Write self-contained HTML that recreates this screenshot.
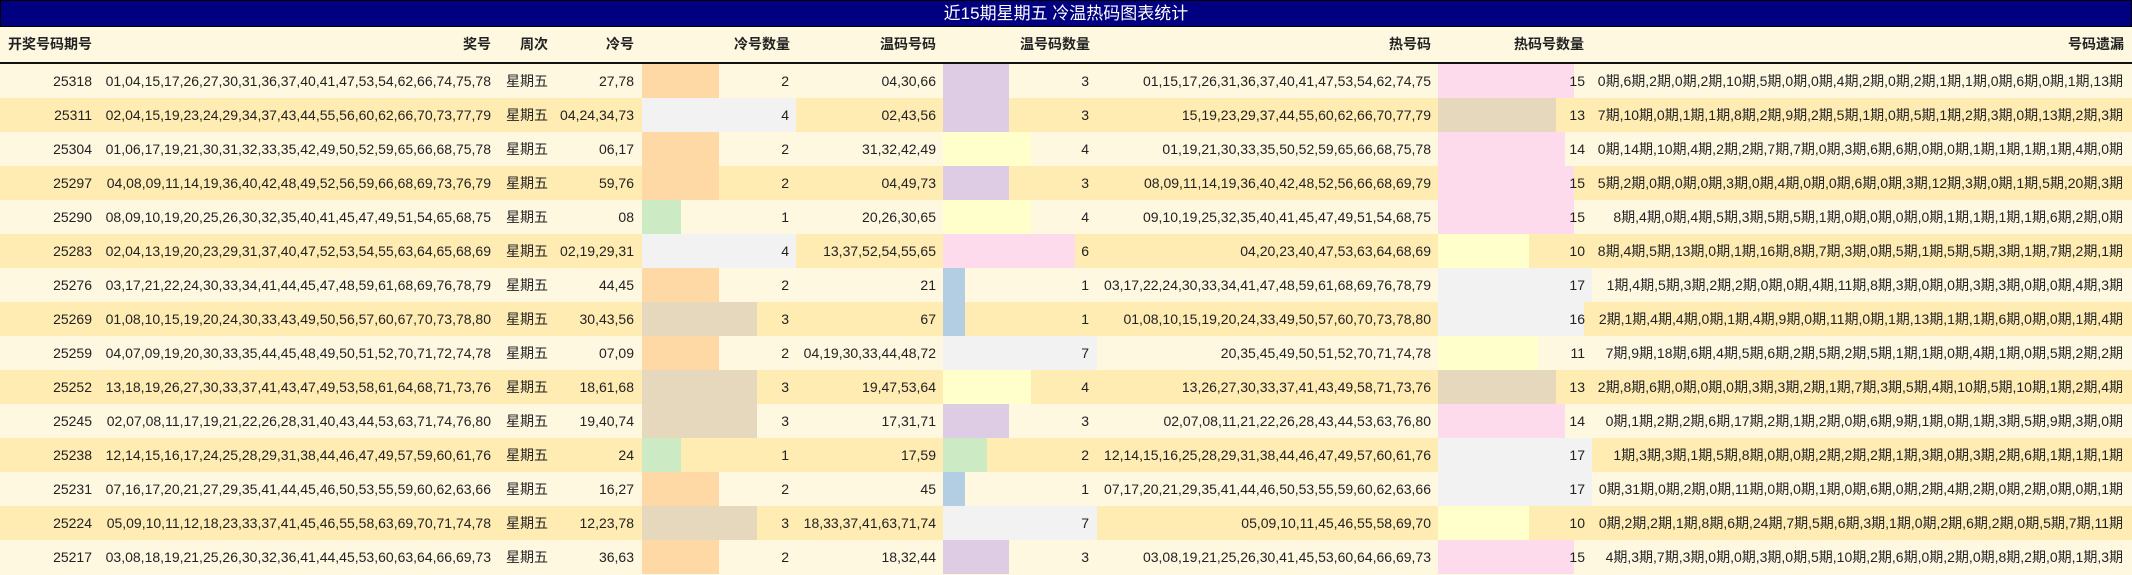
<!DOCTYPE html>
<html><head><meta charset="utf-8"><style>
*{margin:0;padding:0;box-sizing:border-box}
body{width:2132px;height:575px;overflow:hidden;background:#fff8e1;font-family:"Liberation Sans","Noto Sans CJK SC",sans-serif;font-size:14px;color:#222;position:relative}
#tt{position:absolute;left:0;top:0;width:2132px;height:27px;background:#000080;border:1px solid #000;color:#fff;font-size:17px;line-height:25px;text-align:center}
#hd{position:absolute;left:0;top:27px;width:2132px;height:37px;background:#fff8e1;border-bottom:2px solid #111;font-weight:bold}
#hd .t{line-height:35px}
.r{position:absolute;left:0;width:2132px;height:34px}
.o{background:#fff8e1}.e{background:#ffecb3}
.t{position:absolute;top:0;line-height:34px;white-space:nowrap}
.b{position:absolute;top:0;height:34px}
.a1{right:2040px}.a2{right:1641px}.a3{left:506px}.a4{right:1498px}.a5{right:1343px}.a6{right:1196px}.a7{right:1043px}.a8{right:701px}.a9{right:547px}.a10{right:9px}
.bc{left:642px}.bw{left:943px}.bh{left:1438px}
.G{background:#ccebc5}.P{background:#fed9a6}.T{background:#e5d8bd}.Y{background:#f2f2f2}.B{background:#b3cde3}.L{background:#decbe4}.W{background:#ffffcc}.K{background:#fddaec}
</style></head><body>
<div id="tt">近15期星期五 冷温热码图表统计</div>
<div id="hd">
<span class="t" style="left:8px">开奖号码期号</span>
<span class="t a2">奖号</span>
<span class="t" style="right:1584px">周次</span>
<span class="t a4">冷号</span>
<span class="t" style="right:1342px">冷号数量</span>
<span class="t a6">温码号码</span>
<span class="t" style="right:1042px">温号码数量</span>
<span class="t a8">热号码</span>
<span class="t" style="right:548px">热码号数量</span>
<span class="t" style="right:8px">号码遗漏</span>
</div>

<div class="r o" style="top:64px"><div class="b bc P" style="width:77px"></div><div class="b bw L" style="width:66px"></div><div class="b bh K" style="width:136px"></div>
<span class="t a1">25318</span><span class="t a2">01,04,15,17,26,27,30,31,36,37,40,41,47,53,54,62,66,74,75,78</span><span class="t a3">星期五</span><span class="t a4">27,78</span><span class="t a5">2</span><span class="t a6">04,30,66</span><span class="t a7">3</span><span class="t a8">01,15,17,26,31,36,37,40,41,47,53,54,62,74,75</span><span class="t a9">15</span><span class="t a10">0期,6期,2期,0期,2期,10期,5期,0期,0期,4期,2期,0期,2期,1期,1期,0期,6期,0期,1期,13期</span></div>

<div class="r e" style="top:98px"><div class="b bc Y" style="width:154px"></div><div class="b bw L" style="width:66px"></div><div class="b bh T" style="width:118px"></div>
<span class="t a1">25311</span><span class="t a2">02,04,15,19,23,24,29,34,37,43,44,55,56,60,62,66,70,73,77,79</span><span class="t a3">星期五</span><span class="t a4">04,24,34,73</span><span class="t a5">4</span><span class="t a6">02,43,56</span><span class="t a7">3</span><span class="t a8">15,19,23,29,37,44,55,60,62,66,70,77,79</span><span class="t a9">13</span><span class="t a10">7期,10期,0期,1期,1期,8期,2期,9期,2期,5期,1期,0期,5期,1期,2期,3期,0期,13期,2期,3期</span></div>

<div class="r o" style="top:132px"><div class="b bc P" style="width:77px"></div><div class="b bw W" style="width:88px"></div><div class="b bh K" style="width:127px"></div>
<span class="t a1">25304</span><span class="t a2">01,06,17,19,21,30,31,32,33,35,42,49,50,52,59,65,66,68,75,78</span><span class="t a3">星期五</span><span class="t a4">06,17</span><span class="t a5">2</span><span class="t a6">31,32,42,49</span><span class="t a7">4</span><span class="t a8">01,19,21,30,33,35,50,52,59,65,66,68,75,78</span><span class="t a9">14</span><span class="t a10">0期,14期,10期,4期,2期,2期,7期,7期,0期,3期,6期,6期,0期,0期,1期,1期,1期,1期,4期,0期</span></div>

<div class="r e" style="top:166px"><div class="b bc P" style="width:77px"></div><div class="b bw L" style="width:66px"></div><div class="b bh K" style="width:136px"></div>
<span class="t a1">25297</span><span class="t a2">04,08,09,11,14,19,36,40,42,48,49,52,56,59,66,68,69,73,76,79</span><span class="t a3">星期五</span><span class="t a4">59,76</span><span class="t a5">2</span><span class="t a6">04,49,73</span><span class="t a7">3</span><span class="t a8">08,09,11,14,19,36,40,42,48,52,56,66,68,69,79</span><span class="t a9">15</span><span class="t a10">5期,2期,0期,0期,0期,3期,0期,4期,0期,0期,6期,0期,3期,12期,3期,0期,1期,5期,20期,3期</span></div>

<div class="r o" style="top:200px"><div class="b bc G" style="width:39px"></div><div class="b bw W" style="width:88px"></div><div class="b bh K" style="width:136px"></div>
<span class="t a1">25290</span><span class="t a2">08,09,10,19,20,25,26,30,32,35,40,41,45,47,49,51,54,65,68,75</span><span class="t a3">星期五</span><span class="t a4">08</span><span class="t a5">1</span><span class="t a6">20,26,30,65</span><span class="t a7">4</span><span class="t a8">09,10,19,25,32,35,40,41,45,47,49,51,54,68,75</span><span class="t a9">15</span><span class="t a10">8期,4期,0期,4期,5期,3期,5期,5期,1期,0期,0期,0期,0期,1期,1期,1期,1期,6期,2期,0期</span></div>

<div class="r e" style="top:234px"><div class="b bc Y" style="width:154px"></div><div class="b bw K" style="width:132px"></div><div class="b bh W" style="width:91px"></div>
<span class="t a1">25283</span><span class="t a2">02,04,13,19,20,23,29,31,37,40,47,52,53,54,55,63,64,65,68,69</span><span class="t a3">星期五</span><span class="t a4">02,19,29,31</span><span class="t a5">4</span><span class="t a6">13,37,52,54,55,65</span><span class="t a7">6</span><span class="t a8">04,20,23,40,47,53,63,64,68,69</span><span class="t a9">10</span><span class="t a10">8期,4期,5期,13期,0期,1期,16期,8期,7期,3期,0期,5期,1期,5期,5期,3期,1期,7期,2期,1期</span></div>

<div class="r o" style="top:268px"><div class="b bc P" style="width:77px"></div><div class="b bw B" style="width:22px"></div><div class="b bh Y" style="width:154px"></div>
<span class="t a1">25276</span><span class="t a2">03,17,21,22,24,30,33,34,41,44,45,47,48,59,61,68,69,76,78,79</span><span class="t a3">星期五</span><span class="t a4">44,45</span><span class="t a5">2</span><span class="t a6">21</span><span class="t a7">1</span><span class="t a8">03,17,22,24,30,33,34,41,47,48,59,61,68,69,76,78,79</span><span class="t a9">17</span><span class="t a10">1期,4期,5期,3期,2期,2期,0期,0期,4期,11期,8期,3期,0期,0期,3期,3期,0期,0期,4期,3期</span></div>

<div class="r e" style="top:302px"><div class="b bc T" style="width:115px"></div><div class="b bw B" style="width:22px"></div><div class="b bh Y" style="width:146px"></div>
<span class="t a1">25269</span><span class="t a2">01,08,10,15,19,20,24,30,33,43,49,50,56,57,60,67,70,73,78,80</span><span class="t a3">星期五</span><span class="t a4">30,43,56</span><span class="t a5">3</span><span class="t a6">67</span><span class="t a7">1</span><span class="t a8">01,08,10,15,19,20,24,33,49,50,57,60,70,73,78,80</span><span class="t a9">16</span><span class="t a10">2期,1期,4期,4期,0期,1期,4期,9期,0期,11期,0期,1期,13期,1期,1期,6期,0期,0期,1期,4期</span></div>

<div class="r o" style="top:336px"><div class="b bc P" style="width:77px"></div><div class="b bw Y" style="width:154px"></div><div class="b bh W" style="width:100px"></div>
<span class="t a1">25259</span><span class="t a2">04,07,09,19,20,30,33,35,44,45,48,49,50,51,52,70,71,72,74,78</span><span class="t a3">星期五</span><span class="t a4">07,09</span><span class="t a5">2</span><span class="t a6">04,19,30,33,44,48,72</span><span class="t a7">7</span><span class="t a8">20,35,45,49,50,51,52,70,71,74,78</span><span class="t a9">11</span><span class="t a10">7期,9期,18期,6期,4期,5期,6期,2期,5期,2期,5期,1期,1期,0期,4期,1期,0期,5期,2期,2期</span></div>

<div class="r e" style="top:370px"><div class="b bc T" style="width:115px"></div><div class="b bw W" style="width:88px"></div><div class="b bh T" style="width:118px"></div>
<span class="t a1">25252</span><span class="t a2">13,18,19,26,27,30,33,37,41,43,47,49,53,58,61,64,68,71,73,76</span><span class="t a3">星期五</span><span class="t a4">18,61,68</span><span class="t a5">3</span><span class="t a6">19,47,53,64</span><span class="t a7">4</span><span class="t a8">13,26,27,30,33,37,41,43,49,58,71,73,76</span><span class="t a9">13</span><span class="t a10">2期,8期,6期,0期,0期,0期,3期,3期,2期,1期,7期,3期,5期,4期,10期,5期,10期,1期,2期,4期</span></div>

<div class="r o" style="top:404px"><div class="b bc T" style="width:115px"></div><div class="b bw L" style="width:66px"></div><div class="b bh K" style="width:127px"></div>
<span class="t a1">25245</span><span class="t a2">02,07,08,11,17,19,21,22,26,28,31,40,43,44,53,63,71,74,76,80</span><span class="t a3">星期五</span><span class="t a4">19,40,74</span><span class="t a5">3</span><span class="t a6">17,31,71</span><span class="t a7">3</span><span class="t a8">02,07,08,11,21,22,26,28,43,44,53,63,76,80</span><span class="t a9">14</span><span class="t a10">0期,1期,2期,2期,6期,17期,2期,1期,2期,0期,6期,9期,1期,0期,1期,3期,5期,9期,3期,0期</span></div>

<div class="r e" style="top:438px"><div class="b bc G" style="width:39px"></div><div class="b bw G" style="width:44px"></div><div class="b bh Y" style="width:154px"></div>
<span class="t a1">25238</span><span class="t a2">12,14,15,16,17,24,25,28,29,31,38,44,46,47,49,57,59,60,61,76</span><span class="t a3">星期五</span><span class="t a4">24</span><span class="t a5">1</span><span class="t a6">17,59</span><span class="t a7">2</span><span class="t a8">12,14,15,16,25,28,29,31,38,44,46,47,49,57,60,61,76</span><span class="t a9">17</span><span class="t a10">1期,3期,3期,1期,5期,8期,0期,0期,2期,2期,2期,1期,3期,0期,3期,2期,6期,1期,1期,1期</span></div>

<div class="r o" style="top:472px"><div class="b bc P" style="width:77px"></div><div class="b bw B" style="width:22px"></div><div class="b bh Y" style="width:154px"></div>
<span class="t a1">25231</span><span class="t a2">07,16,17,20,21,27,29,35,41,44,45,46,50,53,55,59,60,62,63,66</span><span class="t a3">星期五</span><span class="t a4">16,27</span><span class="t a5">2</span><span class="t a6">45</span><span class="t a7">1</span><span class="t a8">07,17,20,21,29,35,41,44,46,50,53,55,59,60,62,63,66</span><span class="t a9">17</span><span class="t a10">0期,31期,0期,2期,0期,11期,0期,0期,1期,0期,6期,0期,2期,4期,2期,0期,2期,0期,0期,1期</span></div>

<div class="r e" style="top:506px"><div class="b bc T" style="width:115px"></div><div class="b bw Y" style="width:154px"></div><div class="b bh W" style="width:91px"></div>
<span class="t a1">25224</span><span class="t a2">05,09,10,11,12,18,23,33,37,41,45,46,55,58,63,69,70,71,74,78</span><span class="t a3">星期五</span><span class="t a4">12,23,78</span><span class="t a5">3</span><span class="t a6">18,33,37,41,63,71,74</span><span class="t a7">7</span><span class="t a8">05,09,10,11,45,46,55,58,69,70</span><span class="t a9">10</span><span class="t a10">0期,2期,2期,1期,8期,6期,24期,7期,5期,6期,3期,1期,0期,2期,6期,2期,0期,5期,7期,11期</span></div>

<div class="r o" style="top:540px"><div class="b bc P" style="width:77px"></div><div class="b bw L" style="width:66px"></div><div class="b bh K" style="width:136px"></div>
<span class="t a1">25217</span><span class="t a2">03,08,18,19,21,25,26,30,32,36,41,44,45,53,60,63,64,66,69,73</span><span class="t a3">星期五</span><span class="t a4">36,63</span><span class="t a5">2</span><span class="t a6">18,32,44</span><span class="t a7">3</span><span class="t a8">03,08,19,21,25,26,30,41,45,53,60,64,66,69,73</span><span class="t a9">15</span><span class="t a10">4期,3期,7期,3期,0期,0期,3期,0期,5期,10期,2期,6期,0期,2期,0期,8期,2期,0期,1期,3期</span></div>
</body></html>
